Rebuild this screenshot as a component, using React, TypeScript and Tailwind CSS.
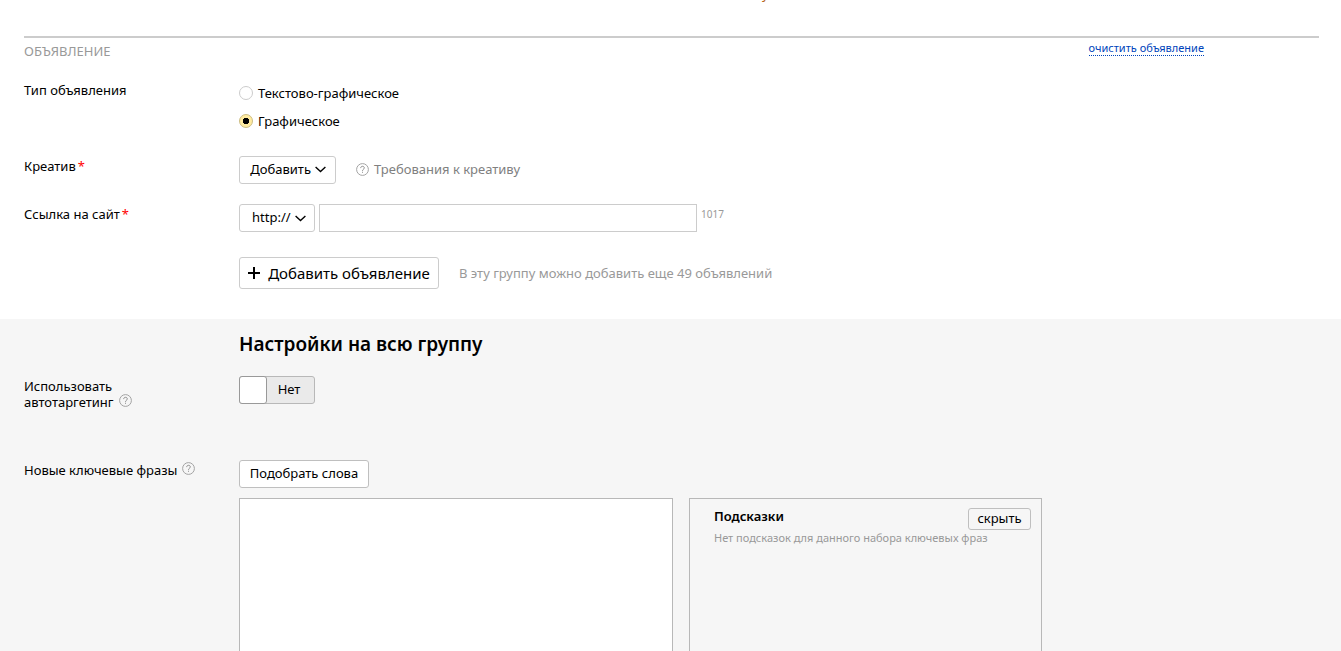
import { useState, type ReactNode } from "react";

function HelpIcon() {
  return (
    <svg width="13" height="13" viewBox="0 0 13 13" fill="none" className="shrink-0" aria-hidden="true">
      <circle cx="6.5" cy="6.5" r="5.9" stroke="#a3a3a3" />
      <path d="M4.7 5.1C4.7 4 5.4 3.3 6.5 3.3s1.8.7 1.8 1.6c0 1.4-1.8 1.4-1.8 2.9" stroke="#8c8c8c" />
      <path d="M6 8.8h1v1H6z" fill="#8c8c8c" />
    </svg>
  );
}

function Chevron() {
  return (
    <svg width="11" height="7" viewBox="0 0 11 7" fill="none" aria-hidden="true">
      <path d="M.6 1l4.9 4.5L10.4 1" stroke="#000" strokeWidth="1.4" />
    </svg>
  );
}

function Required() {
  return <span className="ml-0.5 text-[#f00]">*</span>;
}

function Row({ label, children, className = "" }: { label?: ReactNode; children: ReactNode; className?: string }) {
  return (
    <div className={`grid grid-cols-[215px_minmax(0,1fr)] items-start ${className}`}>
      <div className="leading-4">{label}</div>
      <div>{children}</div>
    </div>
  );
}

function AdTypeOption({ value, current, onSelect, children }: { value: string; current: string; onSelect: (value: string) => void; children: ReactNode }) {
  return (
    <label className="flex h-5 items-center gap-[5px]">
      <input
        type="radio"
        name="ad-type"
        value={value}
        checked={current === value}
        onChange={() => onSelect(value)}
        className="size-3.5 appearance-none rounded-full border border-[#ccc] bg-white checked:border-[#ccbc80] checked:bg-[radial-gradient(circle,#000_2px,#000_3px,#ffeba0_3px)]"
      />
      {children}
    </label>
  );
}

export default function App() {
  const [adType, setAdType] = useState("image");
  const [auto, setAuto] = useState(false);

  return (
    <main className="flex h-screen flex-col overflow-hidden bg-white font-['Noto_Sans',sans-serif] text-[13px] leading-4 text-black">
      <div className="h-9 shrink-0 overflow-hidden">
        <p className="-mt-3.5 ml-[762px] text-[#b5651d]">у</p>
      </div>
      <section className="shrink-0 px-6 pb-[30px]">
        <div className="-mr-0.5 flex items-start justify-between border-t-2 border-[#ccc]">
          <h2 className="pt-[5px] text-[13px] text-[#999]">ОБЪЯВЛЕНИЕ</h2>
          <a href="#clear" className="mr-[115px] mt-[3px] border-b border-dotted border-[#04b] text-[11px] leading-[14px] text-[#04b]">
            очистить объявление
          </a>
        </div>
        <Row className="mt-[23px]" label="Тип объявления">
          <div className="mt-px flex flex-col items-start gap-2">
            <AdTypeOption value="text" current={adType} onSelect={setAdType}>Текстово-графическое</AdTypeOption>
            <AdTypeOption value="image" current={adType} onSelect={setAdType}>Графическое</AdTypeOption>
          </div>
        </Row>
        <Row className="mt-[25px]" label={<span className="block pt-0.5">Креатив<Required /></span>}>
          <div className="flex items-center gap-5">
            <button type="button" className="flex h-7 w-[97px] items-center justify-end gap-1 rounded-[3px] border border-[#ccc] pr-[9px] pb-0.5">
              Добавить <Chevron />
            </button>
            <a href="#requirements" className="flex items-center gap-[5px] pb-0.5 text-[#808080]">
              <HelpIcon /> Требования к креативу
            </a>
          </div>
        </Row>
        <Row className="mt-5" label={<label htmlFor="site" className="block pt-0.5">Ссылка на сайт<Required /></label>}>
          <div className="flex items-start gap-1">
            <div className="grid w-19 items-center">
              <select aria-label="Протокол" className="col-start-1 row-start-1 h-7 w-full appearance-none rounded-[3px] border border-[#ccc] bg-white pb-0.5 pl-3">
                <option>http://</option>
                <option>https://</option>
              </select>
              <span className="pointer-events-none col-start-1 row-start-1 mr-[9px] justify-self-end"><Chevron /></span>
            </div>
            <input id="site" type="text" className="h-7 w-[378px] border border-[#ccc] px-2" />
            <span className="pt-0.5 text-[10px] text-[#999]">1017</span>
          </div>
        </Row>
        <Row className="mt-[25px]">
          <div className="flex items-center gap-5">
            <button type="button" className="flex h-8 w-[200px] items-center justify-center gap-2 rounded-[3px] border border-[#ccc] text-[15px]">
              <svg width="12" height="12" viewBox="0 0 12 12" aria-hidden="true">
                <path d="M5 0h2v5h5v2H7v5H5V7H0V5h5z" />
              </svg>
              Добавить объявление
            </button>
            <span className="text-[#999]">В эту группу можно добавить еще 49 объявлений</span>
          </div>
        </Row>
      </section>
      <section className="flex-1 bg-[#f6f6f6] px-6">
        <Row className="pt-[13px]">
          <h2 className="text-[19px] leading-6 font-semibold">Настройки на всю группу</h2>
        </Row>
        <Row
          className="mt-5"
          label={
            <div className="pt-0.5">
              Использовать
              <div className="flex gap-[5px]">автотаргетинг <HelpIcon /></div>
            </div>
          }
        >
          <button
            type="button"
            role="switch"
            aria-checked={auto}
            aria-label="Использовать автотаргетинг"
            onClick={() => setAuto(!auto)}
            className="grid h-7 w-19 grid-cols-[26px_1fr] rounded-[3px] border border-[#b8b8b8] bg-[#eaeaea]"
          >
            <span className="-m-px rounded-[3px] border border-[#999] bg-white" />
            <span className="self-center pr-0.5 pb-0.5">{auto ? "Да" : "Нет"}</span>
          </button>
        </Row>
        <Row
          className="mt-[50px]"
          label={<label htmlFor="phrases" className="flex gap-[5px] pt-0.5">Новые ключевые фразы <HelpIcon /></label>}
        >
          <button type="button" className="block h-7 w-[130px] rounded-[3px] border border-[#bfbfbf] bg-white pb-0.5">
            Подобрать слова
          </button>
          <div className="mt-2.5 flex items-stretch gap-4">
            <textarea id="phrases" className="h-50 w-[434px] resize-none border border-[#b8b8b8] bg-white p-2" />
            <aside className="w-[353px] border border-[#b8b8b8] pt-[9px] pr-2.5 pl-6">
              <div className="flex items-start justify-between">
                <h3 className="font-semibold">Подсказки</h3>
                <button type="button" className="h-[22px] w-[63px] rounded-[3px] border border-[#bfbfbf] pb-0.5">скрыть</button>
              </div>
              <p className="text-[11px] text-[#999]">Нет подсказок для данного набора ключевых фраз</p>
            </aside>
          </div>
        </Row>
      </section>
    </main>
  );
}
